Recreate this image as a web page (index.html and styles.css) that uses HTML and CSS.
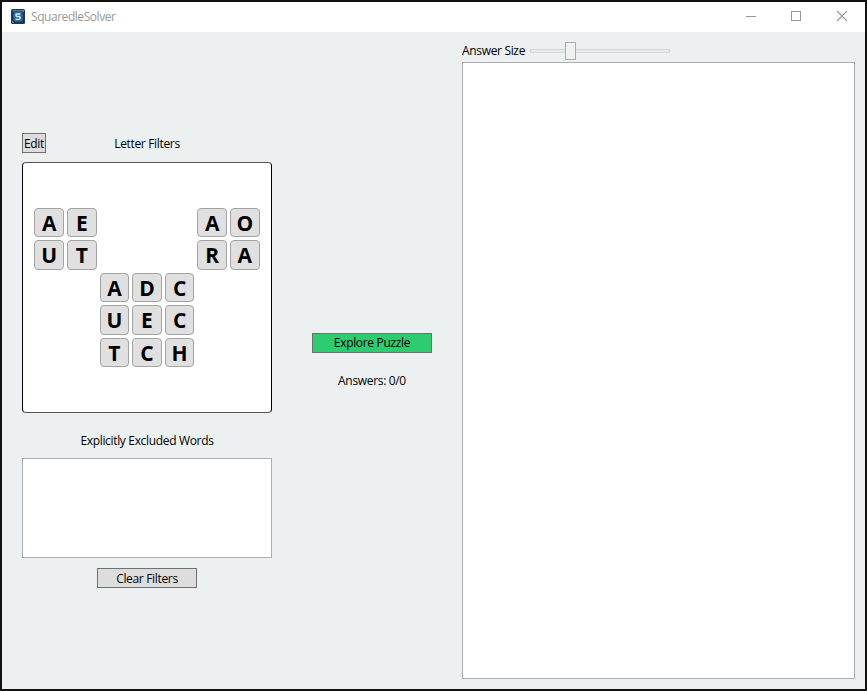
FILE: index.html
```html
<!DOCTYPE html>
<html lang="en">
<head>
<meta charset="utf-8">
<title>SquaredleSolver</title>
<link rel="stylesheet" href="styles.css">
</head>
<body>
<div class="window">
  <header class="titlebar">
    <svg class="app-icon" width="14" height="15" viewBox="0 0 14 15">
      <rect width="14" height="15" rx="1.5" fill="#1d3a55"/>
      <rect x="1.5" y="1" width="11" height="1.5" fill="#54748c"/>
      <rect x="2.5" y="3" width="9" height="9.5" rx="2" fill="#2d6fa5"/>
      <path d="M9.3 5H6Q4.8 5 4.8 6.1T6 7.5H8Q9.2 7.5 9.2 8.8T8 10.3H4.7" fill="none" stroke="#d5ecfa" stroke-width="1.3"/>
      <path d="M11 1.5h1.5V3M1.5 12v1.5H3" fill="none" stroke="#7290a5"/>
    </svg>
    <span class="title">SquaredleSolver</span>
    <div class="controls">
      <svg width="46" height="30" viewBox="0 0 46 30"><path d="M18 14.5h10" stroke="#999"/></svg>
      <svg width="46" height="30" viewBox="0 0 46 30"><rect x="17.5" y="9.5" width="9" height="9" fill="none" stroke="#999"/></svg>
      <svg width="45" height="30" viewBox="0 0 45 30"><path d="M17 9l10 10M27 9L17 19" stroke="#999" stroke-width="1.1"/></svg>
    </div>
  </header>
  <main class="content">
    <section class="filters">
      <div class="filter-head">
        <button class="btn edit"><span>Edit</span></button>
        <span class="heading">Letter Filters</span>
      </div>
      <div class="board">
        <b class="tile r2 c1">A</b><b class="tile r2 c2">E</b><b class="tile r2 c6">A</b><b class="tile r2 c7">O</b>
        <b class="tile r3 c1">U</b><b class="tile r3 c2">T</b><b class="tile r3 c6">R</b><b class="tile r3 c7">A</b>
        <b class="tile r4 c3">A</b><b class="tile r4 c4">D</b><b class="tile r4 c5">C</b>
        <b class="tile r5 c3">U</b><b class="tile r5 c4">E</b><b class="tile r5 c5">C</b>
        <b class="tile r6 c3">T</b><b class="tile r6 c4">C</b><b class="tile r6 c5">H</b>
      </div>
      <div class="excluded-label">Explicitly Excluded Words</div>
      <div class="excluded"></div>
      <button class="btn clear"><span>Clear Filters</span></button>
    </section>
    <section class="actions">
      <button class="btn explore"><span>Explore Puzzle</span></button>
      <div class="count">Answers: 0/0</div>
    </section>
    <section class="answers">
      <div class="size-row">
        <span class="size-label">Answer Size</span>
        <div class="slider"><div class="track"></div><div class="thumb"></div></div>
      </div>
      <div class="results"></div>
    </section>
  </main>
</div>
</body>
</html>
```

FILE: styles.css
```css
* { box-sizing: border-box; }
body {
  margin: 0;
  font: 12px/16px "Open Sans", "Noto Sans", sans-serif;
  letter-spacing: -0.33px;
  color: #000;
}
.window {
  width: 867px;
  height: 691px;
  border: 2px solid #111;
  background: #ecf0f1;
  display: flex;
  flex-direction: column;
  overflow: hidden;
}
.titlebar {
  height: 30px;
  flex: none;
  background: #fff;
  display: flex;
  align-items: center;
  padding-left: 9px;
  color: #999;
}
.app-icon { margin-bottom: 2px; }
.title { margin-left: 6px; white-space: nowrap; letter-spacing: -0.45px; }
.controls { display: flex; margin-left: auto; }
.controls svg { display: block; }
.content {
  flex: 1;
  display: grid;
  grid-template-columns: 250px 120px 393px;
  padding-left: 20px;
}
.filters { padding-top: 101px; display: flex; flex-direction: column; }
.filter-head {
  display: grid;
  grid-template-columns: 24px 1fr 24px;
  align-items: center;
  height: 20px;
  text-align: center;
}
.heading { padding-top: 2px; }
.btn {
  height: 20px;
  padding: 0;
  border: 1px solid #707070;
  background: #ddd;
  font: inherit;
  letter-spacing: inherit;
  color: #000;
  display: flex;
  align-items: center;
  justify-content: center;
  white-space: nowrap;
}
.edit { width: 24px; padding-top: 2px; }
.board {
  margin-top: 9px;
  height: 251px;
  border: 1px solid #000;
  border-top-color: #555;
  border-bottom-color: #555;
  border-radius: 4px;
  background: #fff;
  display: grid;
  grid-template-columns: repeat(7, 29.5px);
  grid-template-rows: repeat(7, 29.5px);
  gap: 3.1px;
  place-content: center;
}
.tile {
  border: 1px solid #a3a3a3;
  border-radius: 4px;
  background: #e0e0e0;
  font-size: 21px;
  line-height: 29px;
  letter-spacing: 0;
  text-align: center;
}
.c1 { grid-column: 1; } .c2 { grid-column: 2; } .c3 { grid-column: 3; }
.c4 { grid-column: 4; } .c5 { grid-column: 5; } .c6 { grid-column: 6; } .c7 { grid-column: 7; }
.r2 { grid-row: 2; } .r3 { grid-row: 3; } .r4 { grid-row: 4; }
.r5 { grid-row: 5; } .r6 { grid-row: 6; }
.excluded-label { margin-top: 20px; text-align: center; }
.excluded {
  margin-top: 9px;
  height: 100px;
  border: 1px solid #abadb3;
  background: #fff;
}
.clear { width: 100px; margin: 10px auto 0; padding-top: 2px; }
.actions { padding-top: 301px; margin-left: 40px; width: 120px; }
.explore { width: 120px; background: #2ecc71; }
.count { margin-top: 20px; text-align: center; }
.answers { margin-left: 70px; width: 393px; padding-top: 9px; }
.size-row { display: flex; align-items: center; height: 20px; }
.size-label { width: 63px; white-space: nowrap; }
.slider {
  position: relative;
  width: 140px;
  height: 18px;
  margin-left: 5px;
  display: flex;
  align-items: center;
}
.track { width: 140px; height: 4px; border: 1px solid #d6d6d6; background: #e7eaea; }
.thumb {
  position: absolute;
  left: 35px;
  top: 0;
  width: 11px;
  height: 18px;
  border: 1px solid #acacac;
  background: #f0f0f0;
}
.results {
  margin-top: 1px;
  height: 617px;
  border: 1px solid #abadb3;
  background: #fff;
}
```
